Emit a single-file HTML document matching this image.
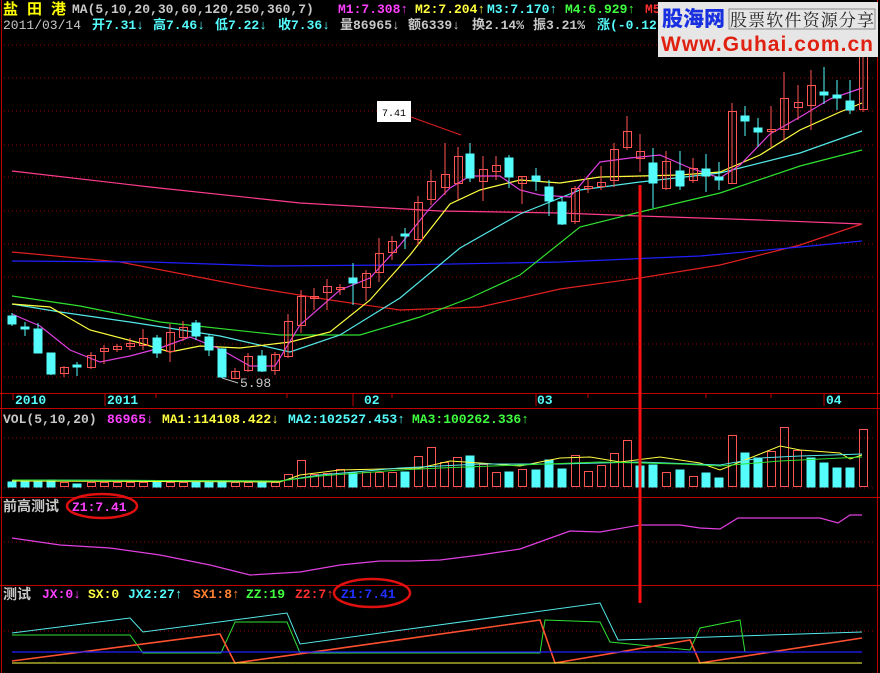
<!DOCTYPE html>
<html><head><meta charset="utf-8"><style>
html,body{margin:0;padding:0;background:#000;width:880px;height:673px;overflow:hidden}
svg{display:block}
text{font-family:"Liberation Mono","Noto Sans CJK SC",monospace;font-size:13px;font-weight:bold}
.r{fill:none;stroke:#ff5454;stroke-width:1}
.c{fill:#54fcfc;stroke:#54fcfc;stroke-width:1}
.wr{stroke:#ff5454}.wc{stroke:#54fcfc}
.g{stroke:#a00000;stroke-dasharray:1 3;stroke-width:1}
</style></head><body>
<svg width="880" height="673" viewBox="0 0 880 673" xmlns="http://www.w3.org/2000/svg">
<rect width="880" height="673" fill="#000"/>
<g stroke="#c00000" stroke-width="1">
<line x1="1.5" y1="0" x2="1.5" y2="673"/>
<line x1="877.5" y1="0" x2="877.5" y2="673"/>
<line x1="0" y1="393.5" x2="880" y2="393.5"/>
<line x1="0" y1="408.5" x2="880" y2="408.5"/>
<line x1="0" y1="497.5" x2="880" y2="497.5"/>
<line x1="0" y1="585.5" x2="880" y2="585.5"/>
</g>
<g class="g">
<line x1="4" y1="45" x2="876" y2="45"/><line x1="4" y1="78" x2="876" y2="78"/><line x1="4" y1="111" x2="876" y2="111"/>
<line x1="4" y1="145" x2="876" y2="145"/><line x1="4" y1="177" x2="876" y2="177"/><line x1="4" y1="211" x2="876" y2="211"/>
<line x1="4" y1="244" x2="876" y2="244"/><line x1="4" y1="277" x2="876" y2="277"/><line x1="4" y1="311" x2="876" y2="311"/>
<line x1="4" y1="344" x2="876" y2="344"/><line x1="4" y1="377" x2="876" y2="377"/>
<line x1="4" y1="438" x2="876" y2="438"/><line x1="4" y1="488" x2="876" y2="488"/>
<line x1="4" y1="542" x2="876" y2="542"/>
<line x1="4" y1="631" x2="876" y2="631"/>
</g>
<g fill="none" stroke-width="1.2">
<polyline stroke="#ff3c8c" points="12,171 150,187 300,203 440,211 560,213 640,216 760,220 862,224"/>
<polyline stroke="#e02020" points="12,252 120,262 250,287 330,300 400,310 480,307 560,289 640,278 720,265 800,245 862,224"/>
<polyline stroke="#2020ff" points="12,261 150,262 270,266 400,265 560,262 700,256 800,247 862,241"/>
<polyline stroke="#30e030" points="12,296 80,306 160,322 280,335 360,335 420,317 470,298 520,275 580,227 640,212 720,193 800,166 862,150"/>
<polyline stroke="#54e8e8" points="12,304 60,312 130,322 220,336 290,352 340,335 400,298 460,248 520,214 580,190 640,182 720,173 800,153 862,131"/>
<polyline stroke="#ffff40" points="12,304 50,307 90,330 140,343 170,352 200,346 240,348 290,342 330,332 370,300 410,255 450,204 480,190 520,180 560,183 600,177 640,176 680,175 720,172 760,155 800,130 840,112 862,103"/>
<polyline stroke="#e040e0" points="12,314 40,326 70,350 100,362 130,356 160,348 190,337 220,349 250,366 275,366 300,325 340,290 370,278 400,245 430,208 450,188 470,176 500,176 520,190 540,195 570,197 600,162 630,158 660,155 690,168 720,178 740,165 770,134 800,117 830,99 862,88"/>
</g>
<g stroke-width="1">
<line class="wc" x1="12" y1="313" x2="12" y2="326"/><rect class="c" x="8" y="316" width="8" height="8"/>
<line class="wc" x1="25" y1="322" x2="25" y2="336"/><rect class="c" x="21" y="327" width="8" height="2"/>
<line class="wc" x1="38" y1="323" x2="38" y2="353"/><rect class="c" x="34" y="329" width="8" height="24"/>
<line class="wc" x1="51" y1="353" x2="51" y2="375"/><rect class="c" x="47" y="353" width="8" height="21"/>
<line class="wr" x1="64" y1="366" x2="64" y2="377"/><rect class="r" x="60.5" y="367.5" width="8" height="6"/>
<line class="wc" x1="77" y1="362" x2="77" y2="376"/><rect class="c" x="73" y="365" width="8" height="2"/>
<line class="wr" x1="91" y1="352" x2="91" y2="369"/><rect class="r" x="87.5" y="355.5" width="8" height="12"/>
<line class="wr" x1="104" y1="345" x2="104" y2="364"/><rect class="r" x="100.5" y="348.5" width="8" height="3"/>
<line class="wr" x1="117" y1="344" x2="117" y2="352"/><rect class="r" x="113.5" y="346.5" width="8" height="3"/>
<line class="wr" x1="130" y1="338" x2="130" y2="350"/><rect class="r" x="126.5" y="343.5" width="8" height="3"/>
<line class="wr" x1="143" y1="329" x2="143" y2="350"/><rect class="r" x="139.5" y="338.5" width="8" height="7"/>
<line class="wc" x1="157" y1="335" x2="157" y2="358"/><rect class="c" x="153" y="338" width="8" height="15"/>
<line class="wr" x1="170" y1="324" x2="170" y2="362"/><rect class="r" x="166.5" y="332.5" width="8" height="19"/>
<line class="wr" x1="183" y1="321" x2="183" y2="341"/><rect class="r" x="179.5" y="327.5" width="8" height="10"/>
<line class="wc" x1="196" y1="320" x2="196" y2="340"/><rect class="c" x="192" y="323" width="8" height="13"/>
<line class="wc" x1="209" y1="334" x2="209" y2="356"/><rect class="c" x="205" y="337" width="8" height="13"/>
<line class="wc" x1="222" y1="348" x2="222" y2="378"/><rect class="c" x="218" y="349" width="8" height="28"/>
<line class="wr" x1="235" y1="368" x2="235" y2="378"/><rect class="r" x="231.5" y="371.5" width="8" height="7"/>
<line class="wr" x1="248" y1="353" x2="248" y2="372"/><rect class="r" x="244.5" y="356.5" width="8" height="14"/>
<line class="wc" x1="262" y1="350" x2="262" y2="372"/><rect class="c" x="258" y="356" width="8" height="15"/>
<line class="wr" x1="275" y1="352" x2="275" y2="375"/><rect class="r" x="271.5" y="354.5" width="8" height="16"/>
<line class="wr" x1="288" y1="314" x2="288" y2="358"/><rect class="r" x="284.5" y="321.5" width="8" height="35"/>
<line class="wr" x1="301" y1="290" x2="301" y2="333"/><rect class="r" x="297.5" y="296.5" width="8" height="29"/>
<line class="wr" x1="314" y1="288" x2="314" y2="310"/><rect class="r" x="310.5" y="296.5" width="8" height="2"/>
<line class="wr" x1="327" y1="279" x2="327" y2="310"/><rect class="r" x="323.5" y="286.5" width="8" height="6"/>
<line class="wr" x1="340" y1="284" x2="340" y2="295"/><rect class="r" x="336.5" y="287.5" width="8" height="2"/>
<line class="wc" x1="353" y1="263" x2="353" y2="305"/><rect class="c" x="349" y="278" width="8" height="5"/>
<line class="wr" x1="366" y1="270" x2="366" y2="301"/><rect class="r" x="362.5" y="273.5" width="8" height="14"/>
<line class="wr" x1="379" y1="238" x2="379" y2="282"/><rect class="r" x="375.5" y="253.5" width="8" height="19"/>
<line class="wr" x1="392" y1="236" x2="392" y2="260"/><rect class="r" x="388.5" y="241.5" width="8" height="11"/>
<line class="wc" x1="405" y1="228" x2="405" y2="249"/><rect class="c" x="401" y="234" width="8" height="2"/>
<line class="wr" x1="418" y1="196" x2="418" y2="245"/><rect class="r" x="414.5" y="202.5" width="8" height="37"/>
<line class="wr" x1="431" y1="170" x2="431" y2="205"/><rect class="r" x="427.5" y="181.5" width="8" height="18"/>
<line class="wr" x1="445" y1="143" x2="445" y2="195"/><rect class="r" x="441.5" y="174.5" width="8" height="13"/>
<line class="wr" x1="458" y1="147" x2="458" y2="200"/><rect class="r" x="454.5" y="156.5" width="8" height="27"/>
<line class="wc" x1="470" y1="143" x2="470" y2="182"/><rect class="c" x="466" y="154" width="8" height="24"/>
<line class="wr" x1="483" y1="156" x2="483" y2="201"/><rect class="r" x="479.5" y="169.5" width="8" height="12"/>
<line class="wr" x1="496" y1="156" x2="496" y2="180"/><rect class="r" x="492.5" y="165.5" width="8" height="6"/>
<line class="wc" x1="509" y1="155" x2="509" y2="188"/><rect class="c" x="505" y="158" width="8" height="19"/>
<line class="wr" x1="522" y1="176" x2="522" y2="204"/><rect class="r" x="518.5" y="176.5" width="8" height="7"/>
<line class="wc" x1="536" y1="168" x2="536" y2="191"/><rect class="c" x="532" y="176" width="8" height="5"/>
<line class="wc" x1="549" y1="180" x2="549" y2="216"/><rect class="c" x="545" y="187" width="8" height="14"/>
<line class="wc" x1="562" y1="197" x2="562" y2="225"/><rect class="c" x="558" y="202" width="8" height="22"/>
<line class="wr" x1="575" y1="186" x2="575" y2="224"/><rect class="r" x="571.5" y="188.5" width="8" height="33"/>
<line class="wr" x1="588" y1="180" x2="588" y2="193"/><rect class="r" x="584.5" y="186.5" width="8" height="2"/>
<line class="wr" x1="601" y1="166" x2="601" y2="190"/><rect class="r" x="597.5" y="182.5" width="8" height="4"/>
<line class="wr" x1="614" y1="143" x2="614" y2="187"/><rect class="r" x="610.5" y="149.5" width="8" height="31"/>
<line class="wr" x1="627" y1="116" x2="627" y2="150"/><rect class="r" x="623.5" y="131.5" width="8" height="16"/>
<line class="wr" x1="640" y1="134" x2="640" y2="172"/><rect class="r" x="636.5" y="151.5" width="8" height="7"/>
<line class="wc" x1="653" y1="148" x2="653" y2="208"/><rect class="c" x="649" y="163" width="8" height="20"/>
<line class="wr" x1="666" y1="151" x2="666" y2="190"/><rect class="r" x="662.5" y="161.5" width="8" height="27"/>
<line class="wc" x1="680" y1="151" x2="680" y2="190"/><rect class="c" x="676" y="171" width="8" height="15"/>
<line class="wr" x1="693" y1="158" x2="693" y2="183"/><rect class="r" x="689.5" y="168.5" width="8" height="12"/>
<line class="wc" x1="706" y1="154" x2="706" y2="192"/><rect class="c" x="702" y="169" width="8" height="7"/>
<line class="wc" x1="719" y1="162" x2="719" y2="190"/><rect class="c" x="715" y="177" width="8" height="3"/>
<line class="wr" x1="732" y1="103" x2="732" y2="184"/><rect class="r" x="728.5" y="111.5" width="8" height="72"/>
<line class="wc" x1="745" y1="106" x2="745" y2="136"/><rect class="c" x="741" y="116" width="8" height="5"/>
<line class="wc" x1="758" y1="118" x2="758" y2="147"/><rect class="c" x="754" y="128" width="8" height="4"/>
<line class="wr" x1="771" y1="106" x2="771" y2="147"/><rect class="r" x="767.5" y="129.5" width="8" height="2"/>
<line class="wr" x1="784" y1="72" x2="784" y2="141"/><rect class="r" x="780.5" y="98.5" width="8" height="31"/>
<line class="wr" x1="798" y1="85" x2="798" y2="120"/><rect class="r" x="794.5" y="102.5" width="8" height="5"/>
<line class="wr" x1="811" y1="70" x2="811" y2="130"/><rect class="r" x="807.5" y="85.5" width="8" height="20"/>
<line class="wc" x1="824" y1="67" x2="824" y2="104"/><rect class="c" x="820" y="92" width="8" height="3"/>
<line class="wc" x1="837" y1="80" x2="837" y2="110"/><rect class="c" x="833" y="95" width="8" height="3"/>
<line class="wc" x1="850" y1="80" x2="850" y2="114"/><rect class="c" x="846" y="101" width="8" height="9"/>
<line class="wr" x1="863" y1="30" x2="863" y2="112"/><rect class="r" x="859.5" y="38.5" width="8" height="71"/>
</g>
<rect x="377" y="101" width="34" height="21" fill="#fff"/>
<text x="382" y="116" style="font-size:10px;font-weight:normal" fill="#000">7.41</text>
<line x1="411" y1="117" x2="461" y2="135" stroke="#e02020"/>
<polyline points="222,378 238,383" stroke="#c0c0c0" fill="none"/>
<text x="240" y="387" fill="#c8c8c8" style="font-size:13px;font-weight:normal">5.98</text>
<g fill="#54fcfc"><text x="15" y="404">2010</text><text x="107" y="404">2011</text><text x="364" y="404">02</text><text x="537" y="404">03</text><text x="826" y="404">04</text></g>
<g stroke="#c00000"><line x1="13" y1="394" x2="13" y2="400"/><line x1="105" y1="394" x2="105" y2="406"/><line x1="156" y1="394" x2="156" y2="398"/><line x1="287" y1="394" x2="287" y2="398"/><line x1="353" y1="394" x2="353" y2="406"/><line x1="392" y1="394" x2="392" y2="398"/><line x1="536" y1="394" x2="536" y2="406"/><line x1="588" y1="394" x2="588" y2="398"/><line x1="706" y1="394" x2="706" y2="398"/><line x1="771" y1="394" x2="771" y2="398"/><line x1="824" y1="394" x2="824" y2="406"/></g>
<g stroke-width="1">
<rect class="c" x="8" y="482" width="8" height="5"/><rect class="c" x="21" y="482" width="8" height="5"/><rect class="c" x="34" y="482" width="8" height="5"/><rect class="c" x="47" y="480" width="8" height="7"/>
<rect class="r" x="60.5" y="482.5" width="8" height="4"/><rect class="c" x="73" y="484" width="8" height="3"/><rect class="r" x="87.5" y="482.5" width="8" height="4"/><rect class="r" x="100.5" y="482.5" width="8" height="4"/><rect class="r" x="113.5" y="482.5" width="8" height="4"/><rect class="r" x="126.5" y="482.5" width="8" height="4"/><rect class="r" x="139.5" y="482.5" width="8" height="4"/>
<rect class="c" x="153" y="482" width="8" height="5"/><rect class="r" x="166.5" y="482.5" width="8" height="4"/><rect class="r" x="179.5" y="482.5" width="8" height="4"/><rect class="c" x="192" y="482" width="8" height="5"/><rect class="c" x="205" y="482" width="8" height="5"/><rect class="c" x="218" y="481" width="8" height="6"/>
<rect class="r" x="231.5" y="482.5" width="8" height="4"/><rect class="r" x="244.5" y="482.5" width="8" height="4"/><rect class="c" x="258" y="482" width="8" height="5"/><rect class="r" x="271.5" y="482.5" width="8" height="4"/>
<rect class="r" x="284.5" y="474.5" width="8" height="12"/><rect class="r" x="297.5" y="460.5" width="8" height="26"/><rect class="r" x="310.5" y="474.5" width="8" height="12"/><rect class="r" x="323.5" y="473.5" width="8" height="13"/><rect class="r" x="336.5" y="469.5" width="8" height="17"/><rect class="c" x="349" y="473" width="8" height="14"/>
<rect class="r" x="362.5" y="472.5" width="8" height="14"/><rect class="r" x="375.5" y="472.5" width="8" height="14"/><rect class="r" x="388.5" y="472.5" width="8" height="14"/><rect class="c" x="401" y="472" width="8" height="15"/><rect class="r" x="414.5" y="456.5" width="8" height="30"/><rect class="r" x="427.5" y="447.5" width="8" height="39"/>
<rect class="r" x="440.5" y="462.5" width="8" height="24"/><rect class="r" x="453.5" y="457.5" width="8" height="29"/><rect class="c" x="466" y="456" width="8" height="31"/><rect class="r" x="479.5" y="464.5" width="8" height="22"/><rect class="r" x="492.5" y="472.5" width="8" height="14"/><rect class="c" x="505" y="472" width="8" height="15"/>
<rect class="r" x="518.5" y="469.5" width="8" height="17"/><rect class="c" x="532" y="470" width="8" height="17"/><rect class="c" x="545" y="460" width="8" height="27"/><rect class="c" x="558" y="469" width="8" height="18"/><rect class="r" x="571.5" y="455.5" width="8" height="31"/><rect class="r" x="584.5" y="471.5" width="8" height="15"/>
<rect class="r" x="597.5" y="465.5" width="8" height="21"/><rect class="r" x="610.5" y="453.5" width="8" height="33"/><rect class="r" x="623.5" y="440.5" width="8" height="46"/><rect class="c" x="636" y="466" width="8" height="21"/><rect class="c" x="649" y="465" width="8" height="22"/><rect class="r" x="662.5" y="472.5" width="8" height="14"/>
<rect class="c" x="676" y="470" width="8" height="17"/><rect class="r" x="689.5" y="476.5" width="8" height="10"/><rect class="c" x="702" y="473" width="8" height="14"/><rect class="c" x="715" y="478" width="8" height="9"/><rect class="r" x="728.5" y="435.5" width="8" height="51"/><rect class="c" x="741" y="453" width="8" height="34"/>
<rect class="c" x="754" y="458" width="8" height="29"/><rect class="r" x="767.5" y="451.5" width="8" height="35"/><rect class="r" x="780.5" y="427.5" width="8" height="59"/><rect class="r" x="793.5" y="450.5" width="8" height="36"/><rect class="c" x="807" y="458" width="8" height="29"/><rect class="c" x="820" y="463" width="8" height="24"/>
<rect class="c" x="833" y="468" width="8" height="19"/><rect class="c" x="846" y="468" width="8" height="19"/><rect class="r" x="859.5" y="429.5" width="8" height="57"/>
</g>
<g fill="none" stroke-width="1">
<polyline stroke="#ffff40" points="12,481 280,482 300,475 340,470 420,468 450,461 480,463 520,466 560,458 590,457 620,462 660,457 700,463 720,470 740,462 780,446 800,450 840,453 850,459 862,455"/>
<polyline stroke="#54e8e8" points="12,480 280,481 320,475 400,468 440,466 480,464 560,464 640,462 720,465 760,458 800,456 862,454"/>
<polyline stroke="#30e030" points="12,480 280,481 320,476 400,470 440,468 520,465 600,462 680,464 720,466 780,461 862,457"/>
</g>
<polyline fill="none" stroke="#e040e0" stroke-width="1.2" points="12,538 60,545 110,548 160,555 210,565 250,575 300,572 340,565 380,561 410,561 440,560 480,555 520,549 545,540 570,531 600,532 640,525 680,525 700,528 720,529 738,518 780,518 820,518 838,523 850,515 862,515"/>
<g fill="none" stroke-width="1">
<polyline stroke="#54e8e8" points="12,633 130,618 143,632 287,613 300,644 600,603 618,640 862,632"/>
<polyline stroke="#30e030" points="12,635 130,635 143,653 221,653 235,622 287,622 300,653 540,653 545,620 600,622 610,642 690,650 700,628 740,620 745,652 862,652"/>
<polyline stroke="#ff5030" stroke-width="1.6" points="12,661 220,634 235,663 540,620 555,663 690,640 700,663 862,638"/>
<line x1="12" y1="652" x2="862" y2="652" stroke="#2020ff" stroke-width="1.2"/>
<line x1="12" y1="663" x2="862" y2="663" stroke="#ffff40"/>
</g>
<rect x="638.5" y="185" width="3" height="418" fill="#ff1010"/>
<text x="3" y="14" fill="#ffff00" style="font-size:15px">盐 田 港</text>
<text x="72" y="13" fill="#c8c8c8">MA(5,10,20,30,60,120,250,360,7)</text>
<text x="338" y="13" fill="#ff40ff">M1:7.308↑</text>
<text x="415" y="13" fill="#ffff40">M2:7.204↑</text>
<text x="487" y="13" fill="#54fcfc">M3:7.170↑</text>
<text x="565" y="13" fill="#40ff40">M4:6.929↑</text>
<text x="645" y="13" fill="#ff3030">M5</text>
<text x="3" y="29" fill="#c8c8c8" style="font-weight:normal">2011/03/14</text>
<g fill="#54fcfc"><text x="92" y="29">开7.31↓</text><text x="153" y="29">高7.46↓</text><text x="215" y="29">低7.22↓</text><text x="278" y="29">收7.36↓</text></g>
<g fill="#c8c8c8"><text x="340" y="29">量86965↓</text><text x="408" y="29">额6339↓</text><text x="472" y="29">换2.14%</text><text x="533" y="29">振3.21%</text></g>
<text x="597" y="29" fill="#54fcfc">涨(-0.12</text>
<rect x="658" y="2" width="220" height="55" fill="#e6e6e6"/>
<text x="662" y="26" fill="#1830e0" style="font-size:21px;font-family:'Noto Sans CJK SC',sans-serif;font-weight:900">股海网</text>
<g stroke="#888" fill="none"><rect x="729" y="9" width="146" height="20"/></g>
<text x="730" y="26" fill="#222" style="font-size:17px;font-family:'Noto Serif CJK SC','Noto Sans CJK SC',serif;font-weight:normal" textLength="144">股票软件资源分享</text>
<text x="661" y="51" fill="#e02010" style="font-size:21px;font-family:'Liberation Sans',sans-serif;font-weight:bold" textLength="212">Www.Guhai.com.cn</text>
<text x="3" y="423" fill="#c8c8c8">VOL(5,10,20)</text>
<text x="107" y="423" fill="#ff40ff">86965↓</text>
<text x="162" y="423" fill="#ffff40">MA1:114108.422↓</text>
<text x="288" y="423" fill="#54fcfc">MA2:102527.453↑</text>
<text x="412" y="423" fill="#40ff40">MA3:100262.336↑</text>
<text x="3" y="511" fill="#c8c8c8" style="font-size:14px">前高测试</text>
<text x="72" y="511" fill="#ff40ff">Z1:7.41</text>
<ellipse cx="102" cy="506" rx="35" ry="12" fill="none" stroke="#e01010" stroke-width="2.5"/>
<text x="3" y="599" fill="#c8c8c8" style="font-size:14px">测试</text>
<text x="42" y="598" fill="#ff40ff">JX:0↓</text>
<text x="88" y="598" fill="#ffff40">SX:0</text>
<text x="128" y="598" fill="#54fcfc">JX2:27↑</text>
<text x="193" y="598" fill="#ff8030">SX1:8↑</text>
<text x="246" y="598" fill="#40ff40">ZZ:19</text>
<text x="295" y="598" fill="#ff3030">Z2:7↑</text>
<text x="341" y="598" fill="#2030ff">Z1:7.41</text>
<ellipse cx="372" cy="593" rx="38" ry="14" fill="none" stroke="#e01010" stroke-width="2.5"/>
</svg>
</body></html>
